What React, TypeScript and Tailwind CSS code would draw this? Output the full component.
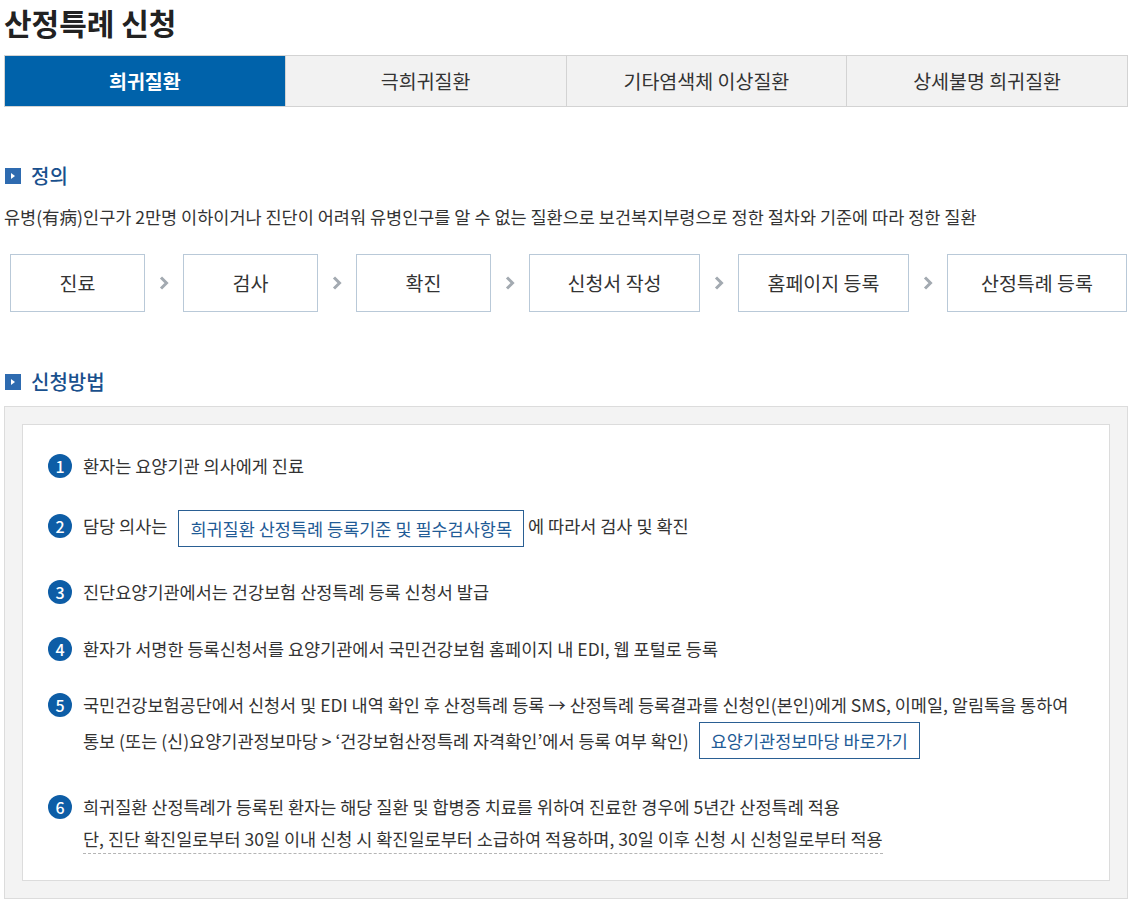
const tabs = ["희귀질환", "극희귀질환", "기타염색체 이상질환", "상세불명 희귀질환"];

const steps = [
  { label: "진료", w: "w-[135px]" },
  { label: "검사", w: "w-[135px]" },
  { label: "확진", w: "w-[135px]" },
  { label: "신청서 작성", w: "w-[171px]" },
  { label: "홈페이지 등록", w: "w-[171px]" },
  { label: "산정특례 등록", w: "w-[180px]" },
];

const Heading = ({ text }: { text: string }) => (
  <div className="flex h-[24px] items-center gap-[10px] pl-[1px]">
    <span className="flex h-[16px] w-[16px] items-center justify-center bg-[#2e6bb0]">
      <svg width="6" height="8" viewBox="0 0 6 8">
        <path d="M1 1 L5 4 L1 7 Z" fill="#fff" />
      </svg>
    </span>
    <span className="text-[20px] font-medium leading-[24px] text-[#19508d]">{text}</span>
  </div>
);

const Num = ({ n }: { n: number }) => (
  <span className="flex h-[24px] w-[24px] shrink-0 items-center justify-center rounded-full bg-[#0d5da6] text-[16px] font-medium leading-none text-white">
    {n}
  </span>
);

const LinkBox = ({ text }: { text: string }) => (
  <span className="inline-flex h-[37px] items-center whitespace-nowrap border border-[#2a5f93] px-[11px] text-[17.5px] text-[#1f5b96]">
    {text}
  </span>
);

export default function App() {
  return (
    <div
      className="w-[1133px] bg-white pl-[4px] pr-[5px] text-[#333]"
      style={{ fontFamily: '"Noto Sans CJK KR", "Noto Sans", sans-serif' }}
    >
      <h1 className="pt-[1px] text-[30px] font-bold leading-[42px] text-[#222]">산정특례 신청</h1>

      <div className="mt-[12px] flex border border-[#d3d3d3]">
        {tabs.map((t, i) => (
          <div
            key={t}
            className={
              i === 0
                ? "flex h-[50px] flex-1 items-center justify-center bg-[#0062aa] text-[19.5px] font-bold text-white"
                : "flex h-[50px] flex-1 items-center justify-center border-l border-[#d3d3d3] bg-[#f2f2f2] text-[19.5px] text-[#333]"
            }
          >
            {t}
          </div>
        ))}
      </div>

      <div className="mt-[57px]">
        <Heading text="정의" />
      </div>

      <p className="mt-[16px] whitespace-nowrap text-[17.5px] leading-[26px]">
        유병(有病)인구가 2만명 이하이거나 진단이 어려워 유병인구를 알 수 없는 질환으로 보건복지부령으로 정한 절차와 기준에 따라 정한 질환
      </p>

      <div className="mt-[24px] flex items-center gap-[38px] pl-[6px]">
        {steps.map((s, i) => (
          <div key={s.label} className="relative flex items-center">
            {i > 0 && (
              <span className="absolute -left-[38px] flex w-[38px] justify-center">
                <svg width="10" height="14" viewBox="0 0 10 14">
                  <path d="M2 1.5 L7.5 7 L2 12.5" fill="none" stroke="#a3aab1" strokeWidth="3" />
                </svg>
              </span>
            )}
            <div
              className={`${s.w} flex h-[58px] items-center justify-center border border-[#b9c9d8] text-[19.5px] text-[#333]`}
            >
              {s.label}
            </div>
          </div>
        ))}
      </div>

      <div className="mt-[58px]">
        <Heading text="신청방법" />
      </div>

      <div className="mt-[12px] border border-[#dcdcdc] bg-[#f3f3f3] p-[17px]">
        <div className="border border-[#dcdcdc] bg-white pb-[25px] pl-[25px] pr-[20px] pt-[25px] text-[17.5px] leading-[32px]">
          <div className="flex items-center gap-[11px]">
            <Num n={1} />
            <span>환자는 요양기관 의사에게 진료</span>
          </div>

          <div className="mt-[22px] flex items-center gap-[11px]">
            <Num n={2} />
            <span>담당 의사는</span>
            <span className="mt-[6px]">
              <LinkBox text="희귀질환 산정특례 등록기준 및 필수검사항목" />
            </span>
            <span className="-ml-[7px]">에 따라서 검사 및 확진</span>
          </div>

          <div className="mt-[29px] flex items-center gap-[11px]">
            <Num n={3} />
            <span>진단요양기관에서는 건강보험 산정특례 등록 신청서 발급</span>
          </div>

          <div className="mt-[25px] flex items-center gap-[11px]">
            <Num n={4} />
            <span>환자가 서명한 등록신청서를 요양기관에서 국민건강보험 홈페이지 내 EDI, 웹 포털로 등록</span>
          </div>

          <div className="mt-[24px] flex gap-[11px]">
            <span className="mt-[4px]">
              <Num n={5} />
            </span>
            <div>
              <div className="whitespace-nowrap">
                국민건강보험공단에서 신청서 및 EDI 내역 확인 후 산정특례 등록 → 산정특례 등록결과를 신청인(본인)에게 SMS, 이메일, 알림톡을 통하여
              </div>
              <div className="mt-[1px] flex h-[37px] items-center gap-[10px]">
                <span>통보 (또는 (신)요양기관정보마당 &gt; ‘건강보험산정특례 자격확인’에서 등록 여부 확인)</span>
                <LinkBox text="요양기관정보마당 바로가기" />
              </div>
            </div>
          </div>

          <div className="mt-[32px] flex gap-[11px]">
            <span className="mt-[4px]">
              <Num n={6} />
            </span>
            <div>
              <div>희귀질환 산정특례가 등록된 환자는 해당 질환 및 합병증 치료를 위하여 진료한 경우에 5년간 산정특례 적용</div>
              <div>
                <span className="border-b border-dashed border-[#b5b5b5] pb-[2px]">
                  단, 진단 확진일로부터 30일 이내 신청 시 확진일로부터 소급하여 적용하며, 30일 이후 신청 시 신청일로부터 적용
                </span>
              </div>
            </div>
          </div>
        </div>
      </div>
      <div className="h-[12px]" />
    </div>
  );
}
